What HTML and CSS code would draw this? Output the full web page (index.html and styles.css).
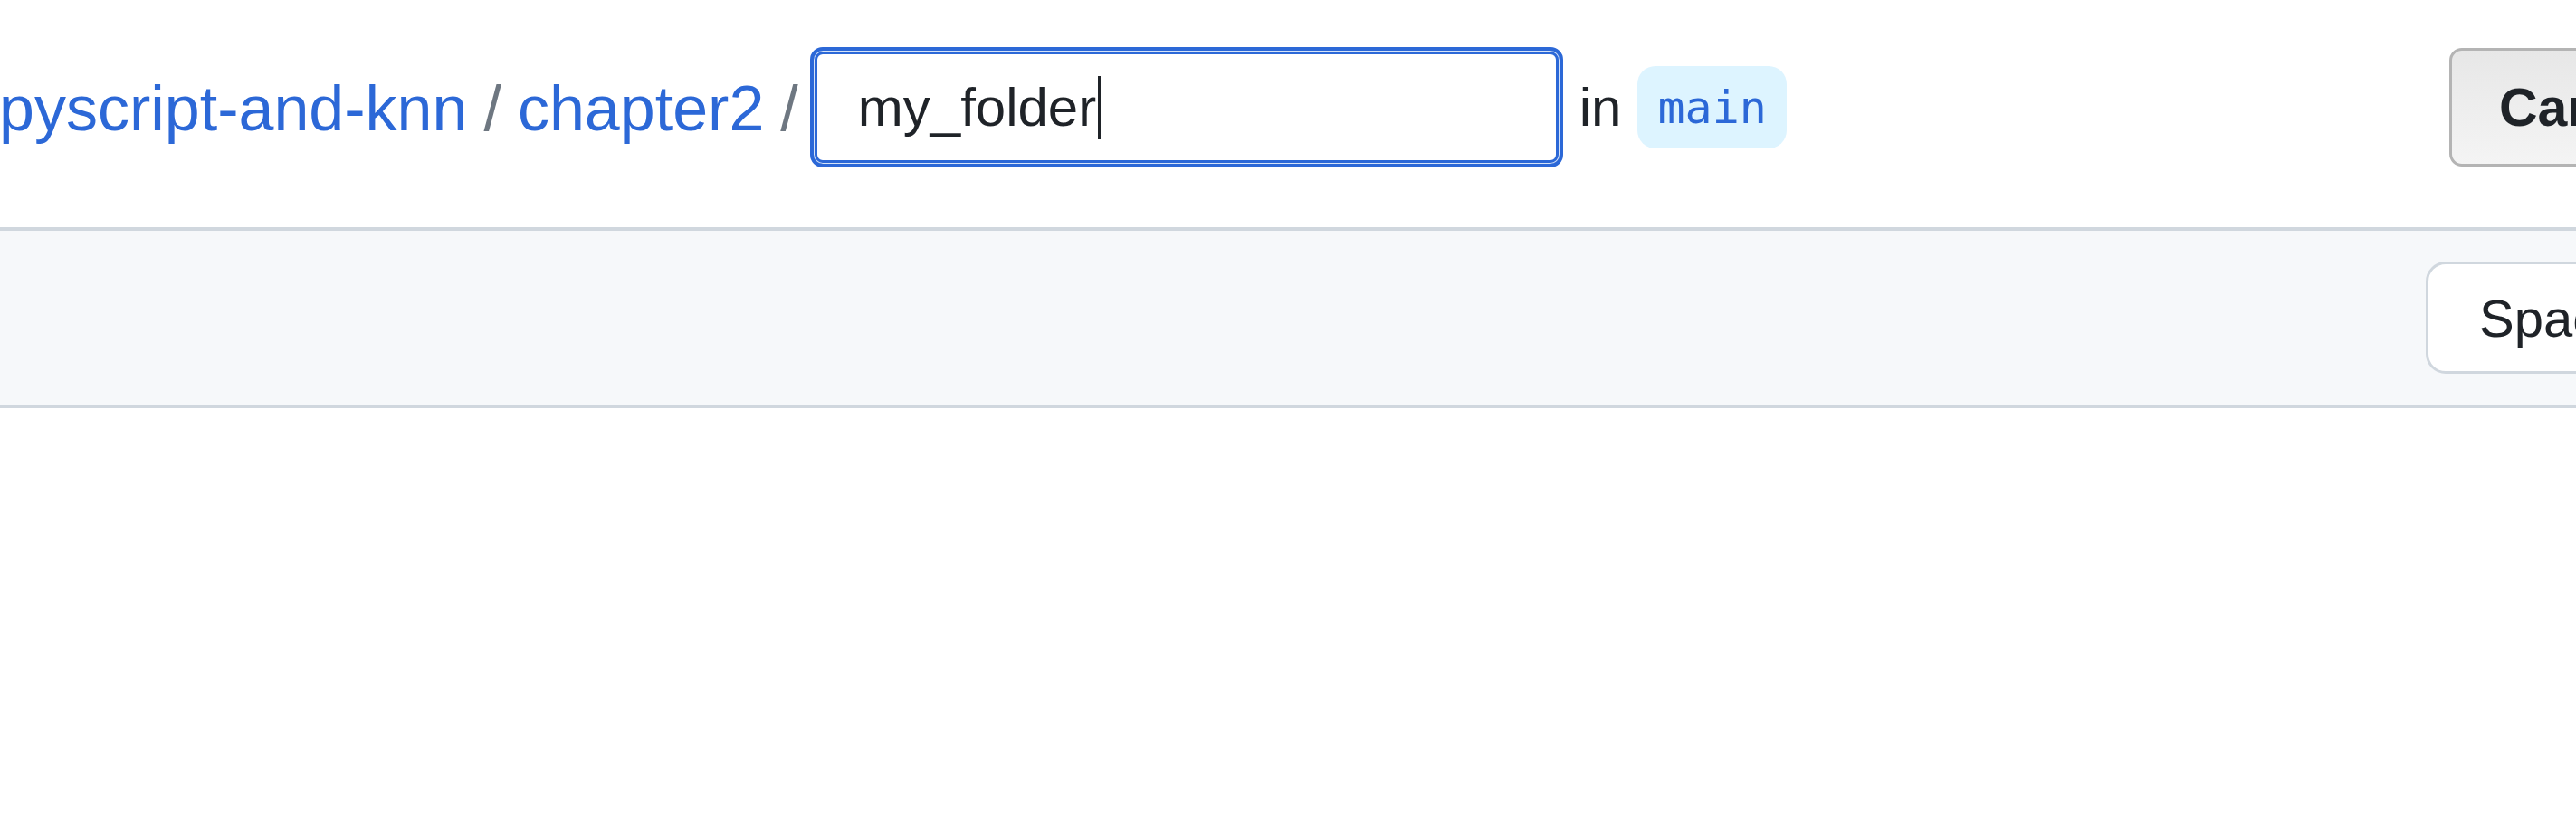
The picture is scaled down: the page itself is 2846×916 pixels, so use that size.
FILE: index.html
```html
<!DOCTYPE html>
<html lang="en">
<head>
<meta charset="utf-8">
<title>New file</title>
<link rel="stylesheet" href="styles.css">
</head>
<body>
<div class="page">
  <header class="header">
    <div class="crumbs">
      <a class="crumb" href="#">pyscript-and-knn</a>
      <span class="sep">/</span>
      <a class="crumb" href="#">chapter2</a>
      <span class="sep">/</span>
      <div class="filename"><span class="filename-text">my_folder</span><span class="caret"></span></div>
      <span class="in">in</span>
      <span class="branch">main</span>
    </div>
    <div class="actions">
      <button class="btn-cancel" type="button">Cancel changes</button>
    </div>
  </header>
  <div class="toolbar">
    <div class="toolbar-left"></div>
    <div class="toolbar-right">
      <button class="btn-select" type="button">Spaces</button>
    </div>
  </div>
</div>
</body>
</html>
```

FILE: styles.css
```css
html, body {
  margin: 0;
  padding: 0;
  background: #ffffff;
  overflow: hidden;
}

body {
  font-family: "Liberation Sans", Arial, sans-serif;
  color: #1f2328;
  width: 2846px;
  height: 916px;
}

.page {
  width: 3300px;
  margin-left: -1px;
}

.header {
  display: grid;
  grid-template-columns: 2707px auto;
  align-items: center;
  padding: 52px 0 66px;
}

.crumbs {
  display: flex;
  align-items: center;
}

.crumb {
  color: #2c68d7;
  text-decoration: none;
  font-size: 70px;
  padding-top: 3px;
}

.sep {
  color: #6e7781;
  font-size: 70px;
  margin: 0 18px;
  padding-top: 3px;
}

.filename {
  box-sizing: border-box;
  width: 832px;
  height: 133px;
  border: 4px solid #2c68d7;
  border-radius: 14px;
  box-shadow: inset 0 0 0 1px #d6e3f7, inset 0 0 0 4px #2c68d7;
  display: flex;
  align-items: center;
  padding-left: 49px;
  font-size: 60px;
  color: #1f2328;
  margin-left: -5px;
}

.caret {
  display: inline-block;
  width: 3px;
  height: 70px;
  background: #1f2328;
  margin-left: 2px;
}

.in {
  font-size: 60px;
  color: #1f2328;
  margin-left: 18px;
}

.branch {
  font-family: "DejaVu Sans Mono", "Liberation Mono", monospace;
  font-size: 50px;
  color: #2c68d7;
  background: #ddf4ff;
  border-radius: 20px;
  padding: 0 22px;
  height: 91px;
  display: flex;
  align-items: center;
  margin-left: 18px;
}

.actions {
  display: flex;
}

.btn-cancel {
  font-family: "Liberation Sans", Arial, sans-serif;
  font-size: 59px;
  font-weight: 700;
  color: #1f2328;
  height: 131px;
  padding: 0 52px;
  border: 3px solid #b4b4b4;
  border-radius: 14px;
  background: linear-gradient(#e7e7e7, #f4f4f4);
  white-space: nowrap;
}

.toolbar {
  display: grid;
  grid-template-columns: 2681px auto;
  align-items: center;
  height: 192px;
  background: #f6f8fa;
  border-top: 4px solid #d0d7de;
  border-bottom: 4px solid #d0d7de;
}

.toolbar-right {
  display: flex;
}

.btn-select {
  font-family: "Liberation Sans", Arial, sans-serif;
  font-size: 58px;
  color: #1f2328;
  height: 124px;
  padding: 0 56px;
  background: #ffffff;
  border: 3px solid #d0d7de;
  border-radius: 22px;
  white-space: nowrap;
}
```
